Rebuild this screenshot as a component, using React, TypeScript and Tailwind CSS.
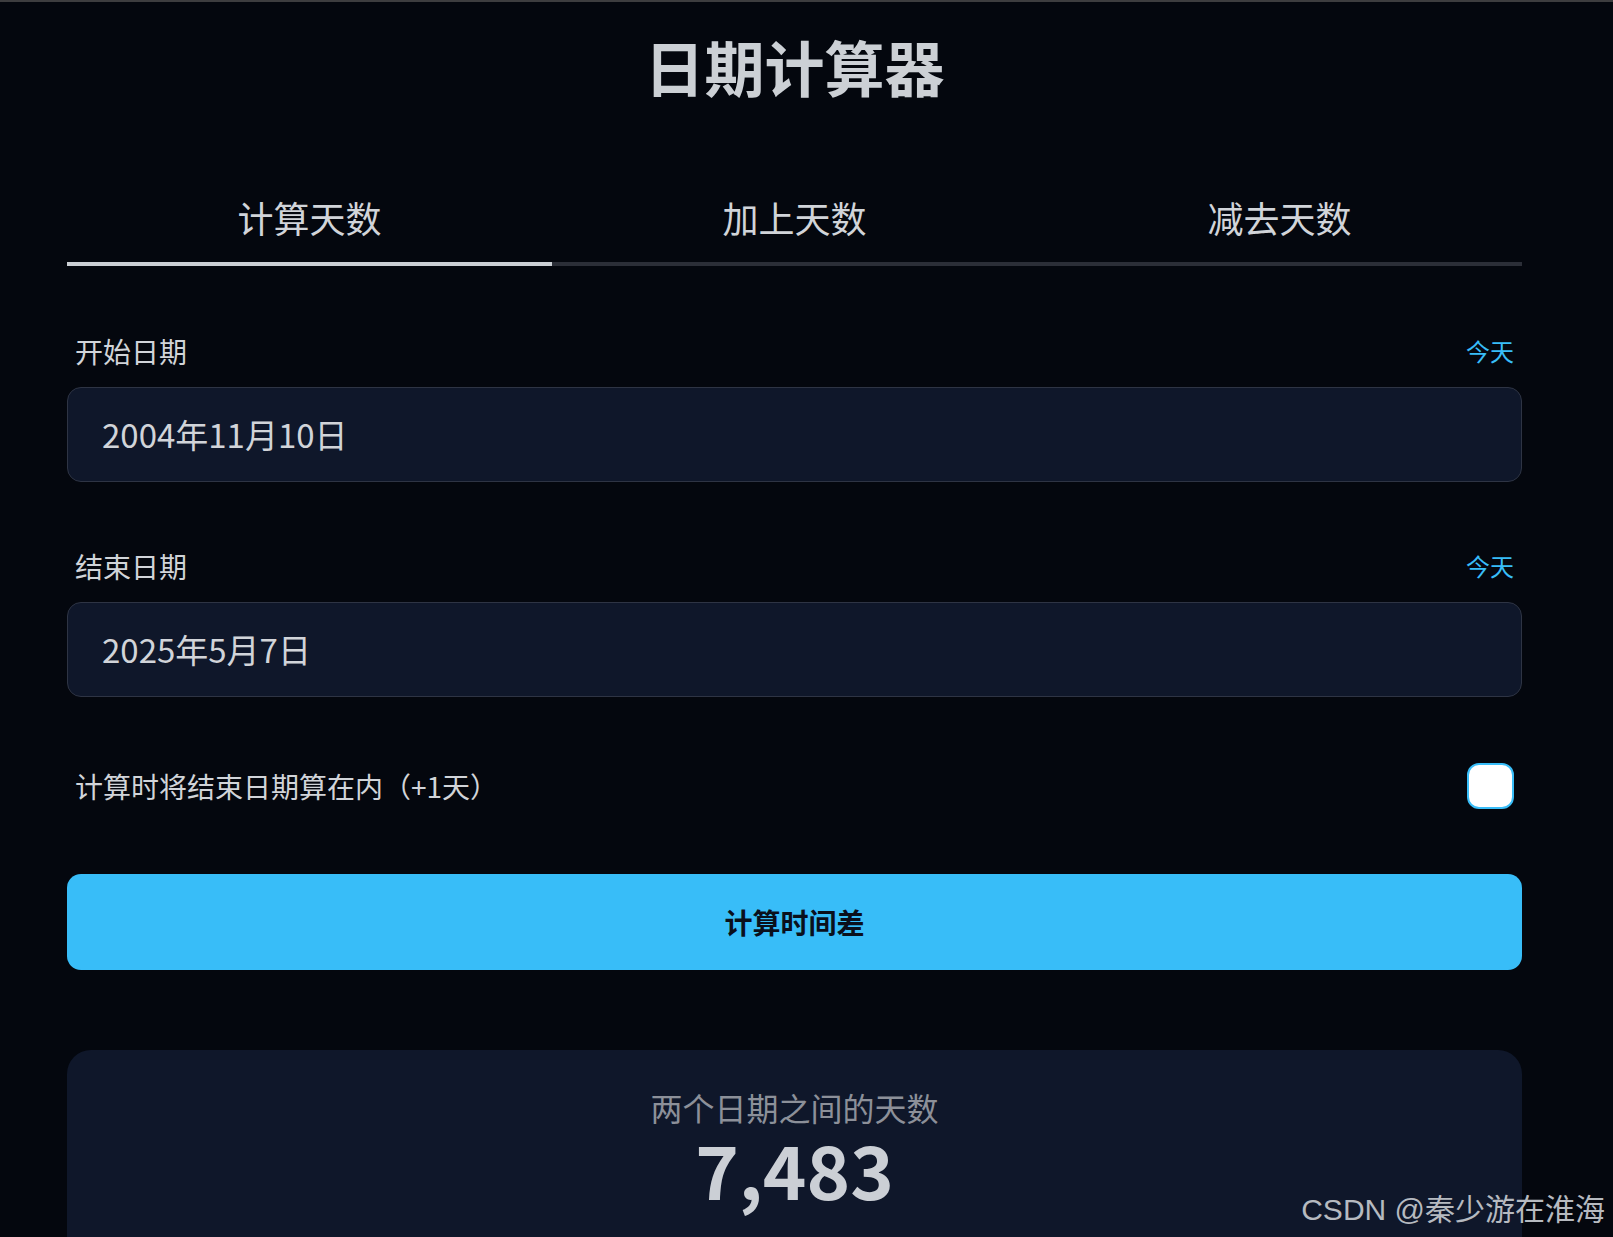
import React, { useState } from "react";

const font = { fontFamily: '"Noto Sans CJK SC", "Noto Sans", sans-serif' };

const tabs = ["计算天数", "加上天数", "减去天数"];

const DateField = ({ label, value, className }: { label: string; value: string; className?: string }) => {
  return (
    <div className={className}>
      <div className="flex items-center justify-between px-2 leading-[42px]">
        <span className="text-[28px] text-[#d1d4d9]">{label}</span>
        <button className="text-[24px] text-[#38bdf8]">今天</button>
      </div>
      <div className="mt-[15px] flex h-[95px] items-center rounded-[14px] border border-[#2e3444] bg-[#0f172a] px-[34px] text-[33px] text-[#d1d4d9]">
        {value}
      </div>
    </div>
  );
};

const App = () => {
  const [active, setActive] = useState(0);
  const [inclusive, setInclusive] = useState(false);

  return (
    <div className="relative min-h-screen border-t-2 border-[#3d3d3f] bg-[#04070e] pr-[24px]" style={font}>
      <div className="mx-auto max-w-[1455px] pb-[60px]">
        {/* title */}
        <h1 className="pt-[34px] text-center text-[60px] font-bold leading-none text-[#ccd0d5]">日期计算器</h1>

        {/* tabs */}
        <div className="mt-[101px] flex">
          {tabs.map((t, i) => (
            <button
              key={t}
              onClick={() => setActive(i)}
              className={
                "flex-1 border-b-4 pb-[25px] text-center text-[36px] leading-[40px] text-[#d1d4d9] " +
                (active === i ? "border-[#cbcfd4]" : "border-[#2b2e37]")
              }
            >
              {t}
            </button>
          ))}
        </div>

        <DateField className="mt-[64px]" label="开始日期" value="2004年11月10日" />
        <DateField className="mt-[63px]" label="结束日期" value="2025年5月7日" />

        {/* include end date */}
        <div className="mt-[66px] flex h-[46px] items-center justify-between px-2">
          <span className="text-[28px] text-[#d1d4d9]">计算时将结束日期算在内（+1天）</span>
          <button
            onClick={() => setInclusive(!inclusive)}
            className={
              "h-[46px] w-[47px] rounded-[12px] border-2 border-[#38bdf8] " +
              (inclusive ? "bg-[#38bdf8]" : "bg-white")
            }
          />
        </div>

        <button className="mt-[65px] h-[96px] w-full rounded-[14px] bg-[#38bdf8] text-[28px] font-bold text-[#0a101c]">
          计算时间差
        </button>

        {/* result */}
        <div className="mt-[80px] h-[260px] rounded-3xl bg-[#0f172a] pt-[40px] text-center">
          <div className="text-[32px] leading-[34px] text-[#8c9099]">两个日期之间的天数</div>
          <div className="mt-[7px] text-[74px] font-bold leading-none text-[#cbcfd5]">7,483</div>
        </div>
      </div>

      {/* watermark */}
      <div
        className="absolute right-[8px] top-[1187px] text-[30px] leading-[42px] text-[#b6bac0]"
        style={{ fontFamily: '"Liberation Sans", "Noto Sans CJK SC", sans-serif' }}
      >
        CSDN @秦少游在淮海
      </div>
    </div>
  );
};

export default App;
